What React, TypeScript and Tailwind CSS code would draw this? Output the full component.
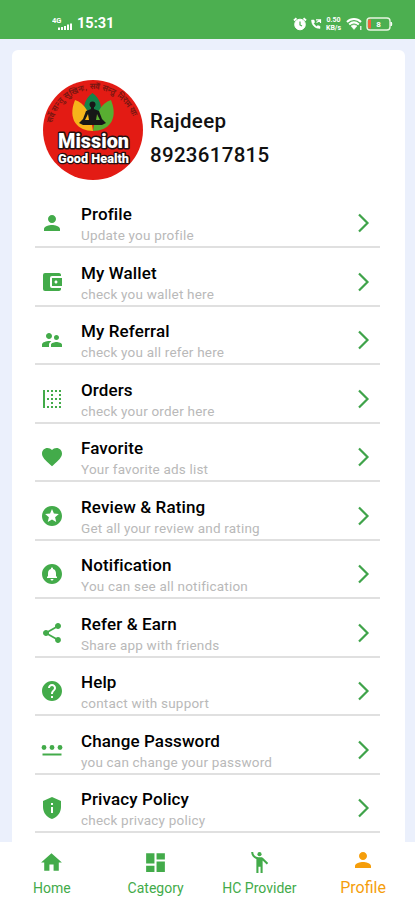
import type { IconType } from "react-icons";
import {
  MdAccountBalanceWallet,
  MdBorderLeft,
  MdCircleNotifications,
  MdDashboard,
  MdEmojiPeople,
  MdFavorite,
  MdHelp,
  MdHome,
  MdPerson,
  MdPrivacyTip,
  MdShare,
  MdStars,
  MdSupervisorAccount,
} from "react-icons/md";

function PasswordIcon({ className }: { className?: string }) {
  return (
    <svg viewBox="0 0 24 24" fill="currentColor" className={className}>
      <circle cx="4" cy="9.500" r="2.400" />
      <circle cx="12" cy="9.500" r="2.400" />
      <circle cx="20" cy="9.500" r="2.400" />
      <path d="M2.500 15.500h19v2h-19z" />
    </svg>
  );
}

type MenuItem = {
  icon: IconType | typeof PasswordIcon;
  title: string;
  description: string;
};

const menu: MenuItem[] = [
  { icon: MdPerson, title: "Profile", description: "Update you profile" },
  { icon: MdAccountBalanceWallet, title: "My Wallet", description: "check you wallet here" },
  { icon: MdSupervisorAccount, title: "My Referral", description: "check you all refer here" },
  { icon: MdBorderLeft, title: "Orders", description: "check your order here" },
  { icon: MdFavorite, title: "Favorite", description: "Your favorite ads list" },
  { icon: MdStars, title: "Review & Rating", description: "Get all your review and rating" },
  { icon: MdCircleNotifications, title: "Notification", description: "You can see all notification" },
  { icon: MdShare, title: "Refer & Earn", description: "Share app with friends" },
  { icon: MdHelp, title: "Help", description: "contact with support" },
  { icon: PasswordIcon, title: "Change Password", description: "you can change your password" },
  { icon: MdPrivacyTip, title: "Privacy Policy", description: "check privacy policy" },
];

function StatusBar() {
  return (
    <header className="flex h-[39px] shrink-0 items-center justify-between bg-[#4caf50] pt-2 pr-[22px] pl-[52px] text-white">
      <div className="flex items-center gap-[3px]">
        <svg viewBox="0 0 22 16" className="h-4 w-[22px]" fill="currentColor">
          <text x="0" y="7" fontSize="7.5" fontWeight="700">4G</text>
          <path d="M6 11.500h2V14H6zM9 11h2v3H9zM12 10h2v4h-2zM15 8.500h2V14h-2zM18 7.500h2V14h-2z" />
        </svg>
        <span className="text-[14.500px] leading-4 font-bold">15:31</span>
      </div>
      <div className="flex items-center">
        <svg viewBox="0 0 14 14" className="mr-[3px] h-3.5 w-3.5" fill="none" stroke="#fff">
          <circle cx="7" cy="7.500" r="5.300" fill="#fff" />
          <path d="M1 3.500 3.500 1.300M13 3.500l-2.500-2.200" strokeWidth="2" />
          <path d="M7 4.500V8l2 1" stroke="#4caf50" strokeWidth="1.200" />
        </svg>
        <svg viewBox="0 0 12 12" className="mr-[3px] h-3 w-3" fill="none" stroke="#fff">
          <path d="M1.500 2c0 5 3.500 8.500 8.500 8.500V8.300L7.700 7.500l-1 1C5.200 7.700 4.300 6.500 3.700 5.300l1-1L4 2z" fill="#fff" strokeWidth=".5" />
          <path d="M6 1.800h5M6.500 4.500l4-2.500v3" strokeWidth="1.200" />
        </svg>
        <div className="mr-1 flex w-[17px] flex-col items-center text-[7px] leading-[8px] font-bold">
          <span>0.50</span>
          <span>KB/s</span>
        </div>
        <svg viewBox="0 0 17 14" className="mr-[3px] h-3.5 w-[17px]" fill="none" stroke="#fff" strokeWidth="2">
          <path d="M1 5c4-4 10-4 14 0M3.200 7.500c3-2.700 6.600-2.700 9.600 0" />
          <path d="m5 9 3 3.500L11 9c-2-1.500-4-1.500-6 0z" fill="#fff" strokeWidth=".5" />
          <path d="M14.800 9v4" strokeWidth="1.200" />
        </svg>
        <svg viewBox="0 0 27 14" className="h-3.5 w-[27px]">
          <rect x="1" y="1" width="23" height="12" rx="3" fill="none" stroke="#e6f5df" strokeWidth="1.400" />
          <path d="M3 2.500h2v9H3a1 1 0 0 1-1-1v-7a1 1 0 0 1 1-1z" fill="#f0643c" />
          <path d="M25 5c1 .5 1 3.500 0 4z" fill="#fff" stroke="#fff" />
          <text x="12.500" y="9.800" fontSize="8" fontWeight="700" textAnchor="middle" fill="#fff">8</text>
        </svg>
      </div>
    </header>
  );
}

function Avatar() {
  return (
    <svg viewBox="0 0 100 100" className="h-[100px] w-[100px] shrink-0">
      <defs>
        <path id="motto" d="M9.500 43A41.500 41.500 0 0 1 91 43" />
      </defs>
      <circle cx="50" cy="50" r="50" fill="#e31b14" />
      <text fontSize="8" fontWeight="700" fill="#7a1711">
        <textPath href="#motto" textLength="108">सर्वे सन्तु सुखिनः, सर्वे सन्तु निरामयाः</textPath>
      </text>
      <path d="M49.500 13c7 5 10 13 8 22h-16c-2-9 1-17 8-22z" fill="#15854a" />
      <path d="M32 20c10 3 16 14 18 31-15 0-26-11-18-31z" fill="#f6b51b" />
      <path d="M68 20c-10 3-16 14-18 31 15 0 26-11 18-31z" fill="#58ae31" />
      <circle cx="49.500" cy="24.500" r="3" fill="#171717" />
      <path fillRule="evenodd" d="M48 27h3v2l5 2 3 8 4 4-4 2H40l-4-2 4-4 3-8 5-2zM45 34l-3 6h4zM54 34l-1 6h4z" fill="#171717" />
      <g fill="#fff" stroke="#251010" strokeLinejoin="round" paintOrder="stroke" fontFamily="Roboto" textAnchor="middle">
        <text x="50.500" y="68" fontSize="20" fontWeight="900" strokeWidth="3" textLength="71" lengthAdjust="spacingAndGlyphs">Mission</text>
        <text x="50.500" y="83" fontSize="12" fontWeight="900" strokeWidth="2.500" textLength="71" lengthAdjust="spacingAndGlyphs">Good Health</text>
      </g>
    </svg>
  );
}

function MenuRow({ icon: Icon, title, description }: MenuItem) {
  return (
    <div className="flex h-[58.500px] shrink-0 items-end border-b-2 border-[#e0e0e0] pl-[5px]">
      <Icon className="mb-[11px] h-6 w-6 shrink-0 text-[#43ab4a]" />
      <div className="ml-[17px] flex-1 whitespace-nowrap">
        <div className="mb-px text-[17px] leading-5 font-medium tracking-[0.12px] text-black">{title}</div>
        <div className="mb-px text-[13.500px] leading-5 tracking-[0.2px] text-[#b9b9b9]">{description}</div>
      </div>
      <svg viewBox="0 0 12 20" className="mr-2.5 mb-[13px] h-5 w-3" fill="none" stroke="#3fa34a" strokeWidth="2.200">
        <path d="m1 1.500 8.500 8.500L1 18.500" />
      </svg>
    </div>
  );
}

function NavItem({ icon: Icon, label, active }: { icon: IconType; label: string; active?: boolean }) {
  return (
    <div className={`flex flex-1 flex-col items-center ${active ? "pt-1.5 text-[#f59e0b]" : "pt-2 text-[#43ab4a]"}`}>
      <Icon className={active ? "h-6 w-6" : "h-[25px] w-[25px]"} />
      <span className={`whitespace-nowrap ${active ? "mt-1.5 text-[16px] leading-5" : "mt-[3px] text-[14px] leading-5"}`}>
        {label}
      </span>
    </div>
  );
}

export default function App() {
  return (
    <div className="flex h-[900px] w-[415px] flex-col overflow-hidden bg-[#ebf0fc] font-['Roboto',sans-serif]">
      <StatusBar />
      <main className="mt-[11px] mr-2.5 ml-3 flex min-h-0 flex-1 flex-col overflow-hidden rounded-t-md bg-white pr-[25px] pl-[23px]">
        <div className="flex shrink-0 items-center pt-[30px] pl-[7.500px]">
          <Avatar />
          <div className="mt-[15px] ml-[7.500px] text-[20.500px] leading-[34px] font-medium tracking-[0.3px] text-[#111]">
            <div>Rajdeep</div>
            <div>8923617815</div>
          </div>
        </div>
        <div className="mt-[9.500px] flex flex-col">
          {menu.map((item) => (
            <MenuRow key={item.title} {...item} />
          ))}
        </div>
      </main>
      <nav className="flex h-[58px] shrink-0 bg-white">
        <NavItem icon={MdHome} label="Home" />
        <NavItem icon={MdDashboard} label="Category" />
        <NavItem icon={MdEmojiPeople} label="HC Provider" />
        <NavItem icon={MdPerson} label="Profile" active />
      </nav>
    </div>
  );
}
